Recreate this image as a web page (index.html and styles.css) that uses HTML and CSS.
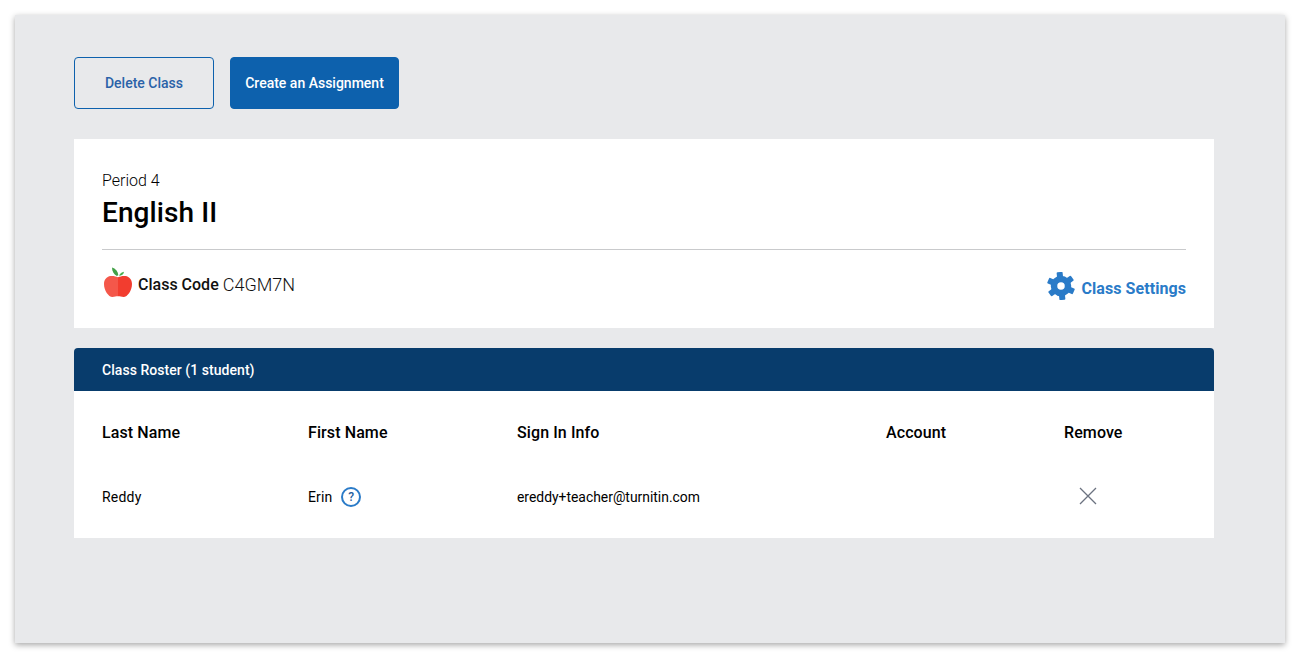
FILE: index.html
```html
<!DOCTYPE html>
<html lang="en">
<head>
<meta charset="utf-8">
<title>English II</title>
<link rel="stylesheet" href="styles.css">
</head>
<body>
<main class="panel">
  <div class="actions">
    <button class="btn btn-outline">Delete Class</button>
    <button class="btn btn-solid">Create an Assignment</button>
  </div>
  <section class="card">
    <div class="period">Period 4</div>
    <h1 class="title">English II</h1>
    <div class="card-foot">
      <div class="code">
        <svg class="apple" viewBox="0 0 28 32" width="28" height="32" aria-hidden="true">
          <path d="M12.800 10C9.800 8.500 8 5.200 8 1.500c3.500 1 6 4 6.300 7.800z" fill="#43a047"/>
          <path d="M15 9.800c1-2.300 2.700-3.500 5-4-.3 2.400-2.300 4-5 4z" fill="#4caf50"/>
          <path d="M14 11.300C12 10.300 9 9.600 6.500 10 2.500 10.600 0 13.800 0 18c0 6.500 4.500 13 8.500 13 2 0 3.500-.7 5.500-.7z" fill="#f4574a"/>
          <path d="M14 11.300c2-1 5-1.700 7.500-1.300 4 .6 6.500 3.800 6.500 8 0 6.500-4.500 13-8.500 13-2 0-3.500-.7-5.500-.7z" fill="#f23d2f"/>
        </svg>
        <span class="code-label">Class Code</span> <span class="code-value">C4GM7N</span>
      </div>
      <a class="settings" href="#">
        <svg class="gear" viewBox="-14 -14 28 28" width="28" height="28" aria-hidden="true">
          <g fill="#2a7bc8" transform="rotate(-6)">
            <rect x="-3" y="-14" width="6" height="7" rx="1"/>
            <rect x="-3" y="-14" width="6" height="7" rx="1" transform="rotate(60)"/>
            <rect x="-3" y="-14" width="6" height="7" rx="1" transform="rotate(120)"/>
            <rect x="-3" y="-14" width="6" height="7" rx="1" transform="rotate(180)"/>
            <rect x="-3" y="-14" width="6" height="7" rx="1" transform="rotate(240)"/>
            <rect x="-3" y="-14" width="6" height="7" rx="1" transform="rotate(300)"/>
          </g>
          <circle r="7" fill="none" stroke="#2a7bc8" stroke-width="6.500"/>
        </svg>
        <span>Class Settings</span>
      </a>
    </div>
  </section>
  <section class="roster">
    <header class="roster-head">Class Roster (1 student)</header>
    <div class="roster-body">
      <div class="row row-head">
        <div>Last Name</div>
        <div>First Name</div>
        <div>Sign In Info</div>
        <div>Account</div>
        <div>Remove</div>
      </div>
      <div class="row row-data">
        <div class="last">Reddy</div>
        <div class="first">Erin <span class="help">?</span></div>
        <div class="email">ereddy+teacher@turnitin.com</div>
        <div></div>
        <div class="remove">
          <svg viewBox="0 0 18 18" width="18" height="18" aria-hidden="true">
            <path d="M1 1l16 16M17 1L1 17" stroke="#6b7280" stroke-width="1.300" fill="none"/>
          </svg>
        </div>
      </div>
    </div>
  </section>
</main>
</body>
</html>
```
FILE: styles.css
```css
* { box-sizing: border-box; }
html, body { height: 100%; }
body {
  margin: 0;
  padding: 15px 14px 18px 15px;
  background: #fff;
  font-family: Roboto, "Liberation Sans", sans-serif;
  color: #000;
}
.panel {
  height: 628px;
  background: #e8e9eb;
  padding: 42px 71px 0 59px;
  box-shadow: 0 2px 6px rgba(0, 0, 0, .35);
}
.actions { display: flex; gap: 16px; margin-bottom: 30px; }
.btn {
  height: 52px;
  border-radius: 4px;
  font-family: inherit;
  font-size: 14px;
  font-weight: 500;
  padding: 0;
  border: 1px solid #0d61ad;
}
.btn-outline { width: 140px; background: transparent; color: #2a62a8; }
.btn-solid { width: 169px; background: #0d61ad; color: #fff; }
.card {
  background: #fff;
  height: 189px;
  padding: 32px 28px 0;
}
.period { font-size: 16px; font-weight: 300; line-height: 19px; }
.title {
  margin: 3px 0 0;
  font-size: 28px;
  letter-spacing: .1px;
  line-height: 40px;
  font-weight: 500;
  padding-bottom: 16px;
  border-bottom: 1px solid #c9cacc;
}
.card-foot {
  display: flex;
  justify-content: space-between;
  align-items: flex-start;
  padding-top: 16px;
}
.code { display: flex; align-items: flex-start; gap: 4px; font-size: 16px; line-height: 38px; color: #111; }
.apple { margin: 0 2px 0 2px; }
.code-label { font-weight: 500; }
.code-value { font-weight: 300; font-size: 18px; }
.settings {
  display: flex;
  align-items: flex-start;
  gap: 6px;
  margin-top: 6px;
  color: #2a7bc8;
  font-size: 16px;
  letter-spacing: .07px;
  line-height: 34px;
  font-weight: 700;
  text-decoration: none;
}
.roster { margin-top: 20px; }
.roster-head {
  height: 43px;
  line-height: 43px;
  padding: 1px 28px 0;
  background: #083c6c;
  color: #fff;
  font-size: 14px;
  letter-spacing: .05px;
  font-weight: 500;
  border-radius: 4px 4px 0 0;
}
.roster-body { background: #fff; height: 147px; padding: 0 28px; }
.row { display: grid; grid-template-columns: 206px 209px 369px 178px 1fr; align-items: center; }
.row-head { height: 83px; font-size: 16px; font-weight: 500; letter-spacing: .1px; }
.row-data { height: 46px; font-size: 14px; }
.last { letter-spacing: .2px; }
.first { display: flex; align-items: center; gap: 8px; letter-spacing: .1px; }
.help {
  width: 20px;
  height: 20px;
  margin-left: 1px;
  border: 2px solid #2a7bc8;
  border-radius: 50%;
  color: #1f5f9e;
  font-size: 12px;
  font-weight: 500;
  display: flex;
  align-items: center;
  justify-content: center;
}
.email { font-size: 13.900px; }
.remove { padding-left: 15px; display: flex; margin-top: -2px; }
```
